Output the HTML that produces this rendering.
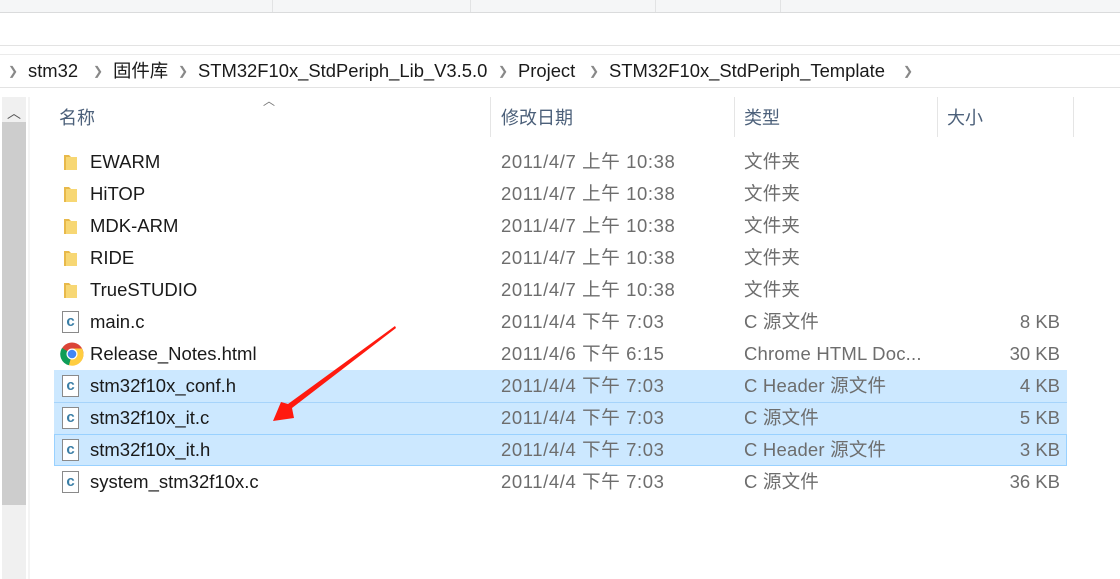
<!DOCTYPE html>
<html><head><meta charset="utf-8"><style>
*{margin:0;padding:0;box-sizing:border-box}
body{width:1120px;height:579px;overflow:hidden;background:#fff;font-family:"Liberation Sans","Noto Sans CJK SC",sans-serif;font-size:18px;color:#1a1a1a;position:relative}
.a{position:absolute;white-space:nowrap;line-height:24px}
.tb{left:0;top:0;width:1120px;height:13px;background:#f5f6f7;border-bottom:1px solid #dadbdc}
.tb i{position:absolute;top:0;height:12px;width:1px;background:#e2e3e4}
.hl{left:0;width:1120px;height:1px;background:#e3e3e3}
.bc{top:59px;font-size:18.4px;color:#1a1a1a}
.cv{top:59px;color:#888;font-size:12px}
.ch{top:106px;color:#4c607a;font-size:18px}
.cd{top:97px;width:1px;height:40px;background:#e5e5e5}
.row{left:0;width:1120px;height:32px}
.row span{position:absolute;top:4px;font-size:18.5px;line-height:24px}
.n{left:90px;color:#1a1a1a}
.d{left:501px;color:#6d6d6d;letter-spacing:0.6px}
.t{left:744px;color:#6d6d6d;letter-spacing:0.2px}
.s{right:60px;color:#6d6d6d}
.sel{position:absolute;left:54px;width:1013px;height:32px;background:#cce8ff}
.folder{position:absolute;left:63px;top:7px;width:15px;height:18px}
.cf{position:absolute;left:62px;top:5px;width:17px;height:22px;border:1px solid #8a8a8a;background:#fff;font:bold 15px "Liberation Sans",sans-serif;color:#3a7ea6;text-align:center;line-height:20px}
</style></head><body>
<div class="a tb"><i style="left:272px"></i><i style="left:470px"></i><i style="left:655px"></i><i style="left:780px"></i></div>
<div class="a hl" style="top:45px"></div>
<div class="a hl" style="top:54px;background:#ebebeb"></div>
<div class="a hl" style="top:87px"></div>
<div class="a cv" style="left:8px">❯</div>
<div class="a bc" style="left:28px">stm32</div>
<div class="a cv" style="left:93px">❯</div>
<div class="a bc" style="left:113px">固件库</div>
<div class="a cv" style="left:178px">❯</div>
<div class="a bc" style="left:198px">STM32F10x_StdPeriph_Lib_V3.5.0</div>
<div class="a cv" style="left:498px">❯</div>
<div class="a bc" style="left:518px">Project</div>
<div class="a cv" style="left:589px">❯</div>
<div class="a bc" style="left:609px">STM32F10x_StdPeriph_Template</div>
<div class="a cv" style="left:903px">❯</div>
<div class="a" style="left:2px;top:97px;width:24px;height:482px;background:#f0f0f0"></div>
<div class="a" style="left:2px;top:122px;width:24px;height:383px;background:#cdcdcd"></div>
<div class="a" style="left:7px;top:101px;font-size:14px;color:#555">︿</div>
<div class="a" style="left:28px;top:97px;width:2px;height:482px;background:#f4f4f4"></div>
<div class="a" style="left:263px;top:89px;font-size:12px;color:#777">︿</div>
<div class="a ch" style="left:59px">名称</div>
<div class="a cd" style="left:490px"></div>
<div class="a ch" style="left:501px">修改日期</div>
<div class="a cd" style="left:734px"></div>
<div class="a ch" style="left:744px">类型</div>
<div class="a cd" style="left:937px"></div>
<div class="a ch" style="left:947px">大小</div>
<div class="a cd" style="left:1073px"></div>

<div class="sel" style="top:370px"></div>
<div class="sel" style="top:402px;border-top:1px solid #a6d4fb"></div>
<div class="sel" style="top:434px;border:1px solid #99d1ff"></div>

<div class="a row" style="top:146px"><svg class="folder" viewBox="0 0 15 18"><path d="M1 2h5l2 2v13H1z" fill="#e8b94a"/><path d="M3 4h11v13H3z" fill="#f7d774"/></svg><span class="n">EWARM</span><span class="d">2011/4/7 上午 10:38</span><span class="t">文件夹</span></div>
<div class="a row" style="top:178px"><svg class="folder" viewBox="0 0 15 18"><path d="M1 2h5l2 2v13H1z" fill="#e8b94a"/><path d="M3 4h11v13H3z" fill="#f7d774"/></svg><span class="n">HiTOP</span><span class="d">2011/4/7 上午 10:38</span><span class="t">文件夹</span></div>
<div class="a row" style="top:210px"><svg class="folder" viewBox="0 0 15 18"><path d="M1 2h5l2 2v13H1z" fill="#e8b94a"/><path d="M3 4h11v13H3z" fill="#f7d774"/></svg><span class="n">MDK-ARM</span><span class="d">2011/4/7 上午 10:38</span><span class="t">文件夹</span></div>
<div class="a row" style="top:242px"><svg class="folder" viewBox="0 0 15 18"><path d="M1 2h5l2 2v13H1z" fill="#e8b94a"/><path d="M3 4h11v13H3z" fill="#f7d774"/></svg><span class="n">RIDE</span><span class="d">2011/4/7 上午 10:38</span><span class="t">文件夹</span></div>
<div class="a row" style="top:274px"><svg class="folder" viewBox="0 0 15 18"><path d="M1 2h5l2 2v13H1z" fill="#e8b94a"/><path d="M3 4h11v13H3z" fill="#f7d774"/></svg><span class="n">TrueSTUDIO</span><span class="d">2011/4/7 上午 10:38</span><span class="t">文件夹</span></div>
<div class="a row" style="top:306px"><div class="cf">c</div><span class="n">main.c</span><span class="d">2011/4/4 下午 7:03</span><span class="t">C 源文件</span><span class="s">8 KB</span></div>
<div class="a row" style="top:338px"><svg style="position:absolute;left:60px;top:4px" width="24" height="24" viewBox="0 0 24 24"><circle cx="12" cy="12" r="11.5" fill="#db4437"/><path d="M12 12 L2 6 A11.5 11.5 0 0 0 9 23.3Z" fill="#0f9d58"/><path d="M12 12 L9 23.3 A11.5 11.5 0 0 0 22 6.5 L12 6.5Z" fill="#ffcd40"/><circle cx="12" cy="12" r="5.5" fill="#fff"/><circle cx="12" cy="12" r="4.3" fill="#4285f4"/></svg><span class="n">Release_Notes.html</span><span class="d">2011/4/6 下午 6:15</span><span class="t">Chrome HTML Doc...</span><span class="s">30 KB</span></div>
<div class="a row" style="top:370px"><div class="cf">c</div><span class="n">stm32f10x_conf.h</span><span class="d">2011/4/4 下午 7:03</span><span class="t">C Header 源文件</span><span class="s">4 KB</span></div>
<div class="a row" style="top:402px"><div class="cf">c</div><span class="n">stm32f10x_it.c</span><span class="d">2011/4/4 下午 7:03</span><span class="t">C 源文件</span><span class="s">5 KB</span></div>
<div class="a row" style="top:434px"><div class="cf">c</div><span class="n">stm32f10x_it.h</span><span class="d">2011/4/4 下午 7:03</span><span class="t">C Header 源文件</span><span class="s">3 KB</span></div>
<div class="a row" style="top:466px"><div class="cf">c</div><span class="n">system_stm32f10x.c</span><span class="d">2011/4/4 下午 7:03</span><span class="t">C 源文件</span><span class="s">36 KB</span></div>

<svg class="a" style="left:0;top:0" width="1120" height="579"><polygon points="395,326 396,328 292,408 294,418 273,421 281,402 288,404" fill="#ff1a0f"/></svg>
</body></html>
